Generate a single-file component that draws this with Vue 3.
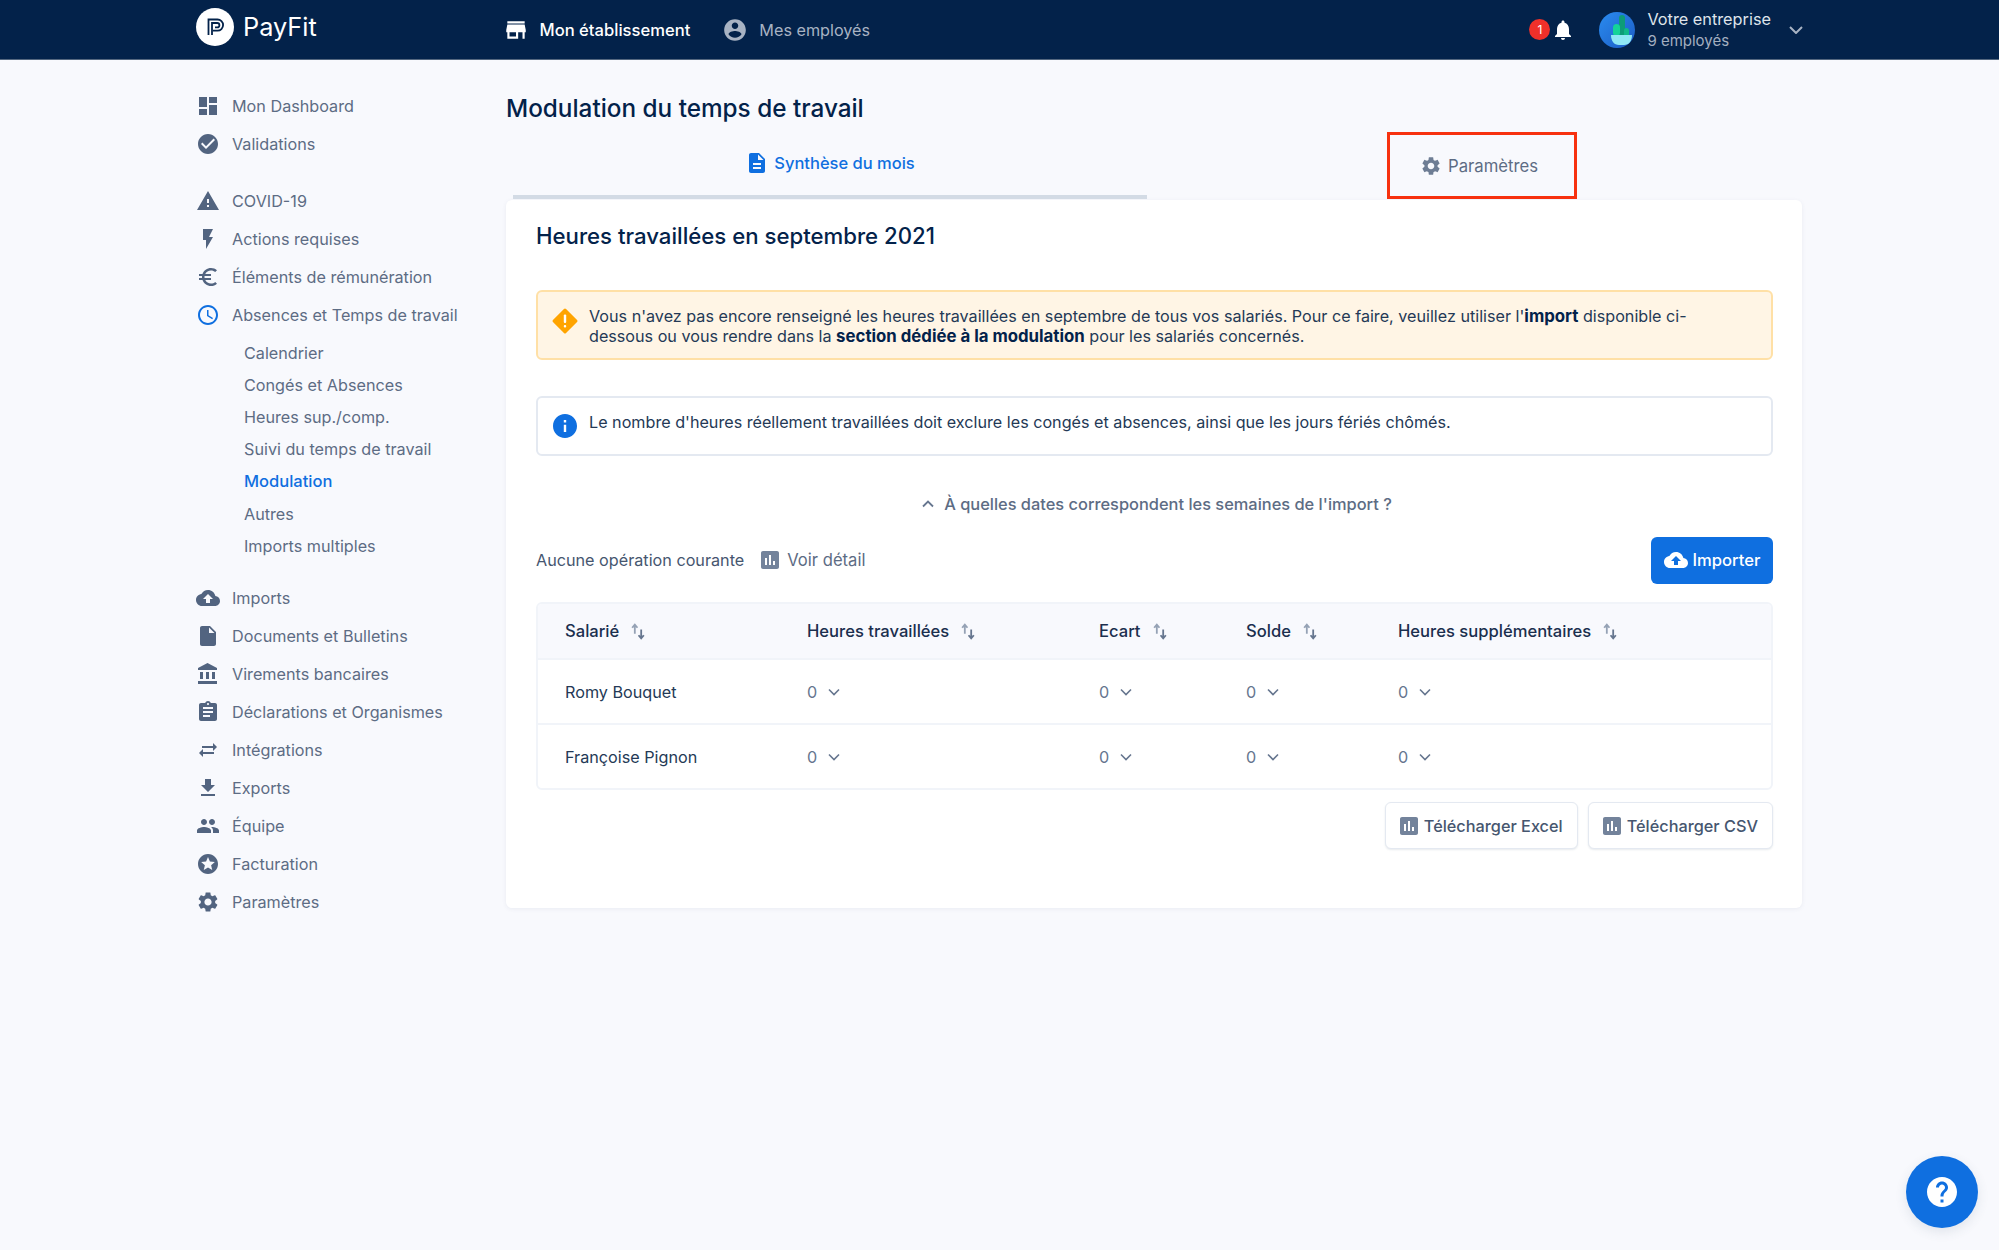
<script setup>
const icons = {
  dashboard: 'M3 13h8V3H3v10zm0 8h8v-6H3v6zm10 0h8V11h-8v10zm0-18v6h8V3h-8z',
  check: 'M12 2C6.48 2 2 6.48 2 12s4.48 10 10 10 10-4.48 10-10S17.52 2 12 2zm-2 15l-5-5 1.41-1.41L10 14.17l7.59-7.59L19 8l-9 9z',
  warning: 'M1 21h22L12 2 1 21zm12-3h-2v-2h2v2zm0-4h-2v-4h2v4z',
  flash: 'M7 2v11h3v9l7-12h-4l4-8z',
  euro: 'M15 18.5c-2.51 0-4.68-1.42-5.76-3.5H15v-2H8.58c-.05-.33-.08-.66-.08-1s.03-.67.08-1H15V9H9.24C10.32 6.92 12.5 5.5 15 5.5c1.61 0 3.09.59 4.23 1.57L21 5.3C19.41 3.87 17.3 3 15 3c-3.92 0-7.24 2.51-8.48 6H3v2h3.06c-.04.33-.06.66-.06 1 0 .34.02.67.06 1H3v2h3.52c1.24 3.49 4.56 6 8.48 6 2.31 0 4.41-.87 6-2.3l-1.78-1.77c-1.13.98-2.6 1.57-4.22 1.57z',
  clock: 'M11.99 2C6.47 2 2 6.48 2 12s4.47 10 9.99 10C17.52 22 22 17.52 22 12S17.52 2 11.99 2zM12 20c-4.42 0-8-3.58-8-8s3.58-8 8-8 8 3.58 8 8-3.58 8-8 8zm.5-13H11v6l5.25 3.15.75-1.23-4.5-2.67z',
  cloud: 'M19.35 10.04C18.67 6.59 15.64 4 12 4 9.11 4 6.6 5.64 5.35 8.04 2.34 8.36 0 10.91 0 14c0 3.31 2.69 6 6 6h13c2.76 0 5-2.24 5-5 0-2.64-2.05-4.78-4.65-4.96zM14 13v4h-4v-4H7l5-5 5 5h-3z',
  file: 'M6 2c-1.1 0-1.99.9-1.99 2L4 20c0 1.1.89 2 1.99 2H18c1.1 0 2-.9 2-2V8l-6-6H6zm7 7V3.5L18.5 9H13z',
  doc: 'M14 2H6c-1.1 0-1.99.9-1.99 2L4 20c0 1.1.89 2 1.99 2H18c1.1 0 2-.9 2-2V8l-6-6zm2 16H8v-2h8v2zm0-4H8v-2h8v2zm-3-5V3.5L18.5 9H13z',
  bank: 'M4 10v7h3v-7H4zm6 0v7h3v-7h-3zM2 22h19v-3H2v3zm14-12v7h3v-7h-3zm-4.5-9L2 6v2h19V6l-9.5-5z',
  clipboard: 'M19 3h-4.18C14.4 1.84 13.3 1 12 1c-1.3 0-2.4.84-2.82 2H5c-1.1 0-2 .9-2 2v14c0 1.1.9 2 2 2h14c1.1 0 2-.9 2-2V5c0-1.1-.9-2-2-2zm-7 0c.55 0 1 .45 1 1s-.45 1-1 1-1-.45-1-1 .45-1 1-1zm2 14H7v-2h7v2zm3-4H7v-2h10v2zm0-4H7V7h10v2z',
  swap: 'M21 9l-4-4v3H6v2h11v3l4-4zM3 15l4 4v-3h11v-2H7v-3l-4 4z',
  download: 'M19 9h-4V3H9v6H5l7 7 7-7zM5 18v2h14v-2H5z',
  people: 'M16 11c1.66 0 2.99-1.34 2.99-3S17.66 5 16 5c-1.66 0-3 1.34-3 3s1.34 3 3 3zm-8 0c1.66 0 2.99-1.34 2.99-3S9.66 5 8 5C6.34 5 5 6.34 5 8s1.34 3 3 3zm0 2c-2.33 0-7 1.17-7 3.5V19h14v-2.5c0-2.33-4.67-3.5-7-3.5zm8 0c-.29 0-.62.02-.97.05 1.16.84 1.97 1.97 1.97 3.45V19h6v-2.5c0-2.33-4.67-3.5-7-3.5z',
  star: 'M11.99 2C6.47 2 2 6.48 2 12s4.47 10 9.99 10C17.52 22 22 17.52 22 12S17.52 2 11.99 2zm4.24 16L12 15.45 7.77 18l1.12-4.81-3.73-3.23 4.92-.42L12 5l1.92 4.53 4.92.42-3.73 3.23L16.23 18z',
  gear: 'M19.14 12.94c.04-.3.06-.61.06-.94 0-.32-.02-.64-.07-.94l2.03-1.58c.18-.14.23-.41.12-.61l-1.92-3.32c-.12-.22-.37-.29-.59-.22l-2.39.96c-.5-.38-1.03-.7-1.62-.94l-.36-2.54c-.04-.24-.24-.41-.48-.41h-3.84c-.24 0-.43.17-.47.41l-.36 2.54c-.59.24-1.13.57-1.62.94l-2.39-.96c-.22-.08-.47 0-.59.22L2.74 8.87c-.12.21-.08.47.12.61l2.03 1.58c-.05.3-.09.63-.09.94s.02.64.07.94l-2.03 1.58c-.18.14-.23.41-.12.61l1.92 3.32c.12.22.37.29.59.22l2.39-.96c.5.38 1.03.7 1.62.94l.36 2.54c.05.24.24.41.48.41h3.84c.24 0 .44-.17.47-.41l.36-2.54c.59-.24 1.13-.56 1.62-.94l2.39.96c.22.08.47 0 .59-.22l1.92-3.32c.12-.22.07-.47-.12-.61l-2.01-1.58zM12 15.6c-1.98 0-3.6-1.62-3.6-3.6s1.62-3.6 3.6-3.6 3.6 1.62 3.6 3.6-1.62 3.6-3.6 3.6z',
  store: 'M20 4H4v2h16V4zm1 10v-2l-1-5H4l-1 5v2h1v6h10v-6h4v6h2v-6h1zm-9 4H6v-4h6v4z',
  account: 'M12 2C6.48 2 2 6.48 2 12s4.48 10 10 10 10-4.48 10-10S17.52 2 12 2zm0 3c1.66 0 3 1.34 3 3s-1.34 3-3 3-3-1.34-3-3 1.34-3 3-3zm0 14.2c-2.5 0-4.71-1.28-6-3.22.03-1.99 4-3.08 6-3.08 1.99 0 5.97 1.09 6 3.08-1.29 1.94-3.5 3.22-6 3.22z',
  bell: 'M12 22c1.1 0 2-.9 2-2h-4c0 1.1.89 2 2 2zm6-6v-5c0-3.07-1.64-5.64-4.5-6.32V4c0-.83-.67-1.5-1.5-1.5s-1.5.67-1.5 1.5v.68C7.63 5.36 6 7.92 6 11v5l-2 2v1h16v-1l-2-2z',
  chart: 'M19 3H5c-1.1 0-2 .9-2 2v14c0 1.1.9 2 2 2h14c1.1 0 2-.9 2-2V5c0-1.1-.9-2-2-2zM9 17H7v-7h2v7zm4 0h-2V7h2v10zm4 0h-2v-4h2v4z',
  help: 'M12 2C6.48 2 2 6.48 2 12s4.48 10 10 10 10-4.48 10-10S17.52 2 12 2zm1 17h-2v-2h2v2zm2.07-7.75l-.9.92C13.45 12.9 13 13.5 13 15h-2v-.5c0-1.1.45-2.1 1.17-2.83l1.24-1.26c.37-.36.59-.86.59-1.41 0-1.1-.9-2-2-2s-2 .9-2 2H8c0-2.21 1.79-4 4-4s4 1.79 4 4c0 .88-.36 1.68-.93 2.25z',
  info: 'M12 2C6.48 2 2 6.48 2 12s4.48 10 10 10 10-4.48 10-10S17.52 2 12 2zm1 15h-2v-6h2v6zm0-8h-2V7h2v2z'
}

const menuGroups = [
  [
    { label: 'Mon Dashboard', icon: 'dashboard' },
    { label: 'Validations', icon: 'check' }
  ],
  [
    { label: 'COVID-19', icon: 'warning' },
    { label: 'Actions requises', icon: 'flash' },
    { label: 'Éléments de rémunération', icon: 'euro' },
    {
      label: 'Absences et Temps de travail',
      icon: 'clock',
      active: true,
      children: ['Calendrier', 'Congés et Absences', 'Heures sup./comp.', 'Suivi du temps de travail', 'Modulation', 'Autres', 'Imports multiples']
    }
  ],
  [
    { label: 'Imports', icon: 'cloud' },
    { label: 'Documents et Bulletins', icon: 'file' },
    { label: 'Virements bancaires', icon: 'bank' },
    { label: 'Déclarations et Organismes', icon: 'clipboard' },
    { label: 'Intégrations', icon: 'swap' },
    { label: 'Exports', icon: 'download' },
    { label: 'Équipe', icon: 'people' },
    { label: 'Facturation', icon: 'star' },
    { label: 'Paramètres', icon: 'gear' }
  ]
]

const columns = ['Salarié', 'Heures travaillées', 'Ecart', 'Solde', 'Heures supplémentaires']
const employees = ['Romy Bouquet', 'Françoise Pignon']
</script>

<template>
  <div class="page">
    <header class="topbar">
      <div class="brand">
        <svg class="brand-mark" viewBox="0 0 38 38">
          <circle cx="19" cy="19" r="19" fill="#fff" />
          <path d="M12.5 27V11.5h9a5.6 5.6 0 0 1 0 11.2h-4.6" fill="none" stroke="#03224a" stroke-width="1.8" />
          <path d="M16 27V15h5.2a2.2 2.2 0 0 1 0 4.4H19" fill="none" stroke="#03224a" stroke-width="1.8" />
        </svg>
        <span class="brand-name">PayFit</span>
      </div>
      <nav class="topnav">
        <a class="topnav-item current">
          <svg viewBox="0 0 24 24"><path :d="icons.store" /></svg>
          Mon établissement
        </a>
        <a class="topnav-item">
          <svg viewBox="0 0 24 24"><path :d="icons.account" /></svg>
          Mes employés
        </a>
      </nav>
      <div class="notif">
        <span class="notif-badge">1</span>
        <svg viewBox="0 0 24 24"><path :d="icons.bell" /></svg>
      </div>
      <div class="company">
        <svg class="company-logo" viewBox="0 0 36 36">
          <defs>
            <linearGradient id="avatar-bg" x1="0" y1="0" x2="1" y2="1">
              <stop offset="0" stop-color="#2a8cf0" />
              <stop offset="1" stop-color="#1c5cc4" />
            </linearGradient>
          </defs>
          <circle cx="18" cy="18" r="18" fill="url(#avatar-bg)" />
          <rect x="20" y="3" width="6" height="21" rx="3" fill="#0d9c78" />
          <rect x="14" y="12" width="7" height="12" rx="3.5" fill="#14d497" />
          <rect x="25" y="16" width="5" height="9" rx="2.5" fill="#0fb888" />
          <path d="M12 23h21c0 6-3 10-8 10h-5c-5 0-8-4-8-10z" fill="#8fe8f4" />
        </svg>
        <div class="company-text">
          <div class="company-name">Votre entreprise</div>
          <div class="company-sub">9 employés</div>
        </div>
        <svg class="company-caret" viewBox="0 0 14 8"><path d="M1 1l6 6 6-6" /></svg>
      </div>
    </header>

    <div class="layout">
      <aside class="sidebar">
        <div v-for="(group, g) in menuGroups" :key="g" class="menu-group">
          <template v-for="item in group" :key="item.label">
            <a class="menu-item" :class="{ active: item.active }">
              <svg viewBox="0 0 24 24"><path :d="icons[item.icon]" /></svg>
              <span>{{ item.label }}</span>
            </a>
            <div v-if="item.children" class="submenu">
              <a
                v-for="child in item.children"
                :key="child"
                class="submenu-item"
                :class="{ current: child === 'Modulation' }"
              >{{ child }}</a>
            </div>
          </template>
        </div>
      </aside>

      <main class="content">
        <h1 class="page-title">Modulation du temps de travail</h1>

        <div class="tabs">
          <a class="tab tab-active">
            <svg viewBox="0 0 24 24"><path :d="icons.doc" /></svg>
            Synthèse du mois
          </a>
          <a class="tab tab-marked">
            <svg viewBox="0 0 24 24"><path :d="icons.gear" /></svg>
            Paramètres
          </a>
        </div>

        <section class="card">
          <h2 class="card-title">Heures travaillées en septembre 2021</h2>

          <div class="notice notice-warn">
            <svg class="notice-diamond" viewBox="0 0 28 28">
              <path d="M14 3l11 11-11 11L3 14z" fill="#ffa400" stroke="#ffa400" stroke-width="3" stroke-linejoin="round" />
              <rect x="12.8" y="7.5" width="2.4" height="8.5" rx="1" fill="#fff" />
              <rect x="12.8" y="18" width="2.4" height="2.4" rx="1" fill="#fff" />
            </svg>
            <p>
              Vous n'avez pas encore renseigné les heures travaillées en septembre de tous vos salariés. Pour ce faire, veuillez utiliser l'<b>import</b> disponible ci-dessous ou vous rendre dans la <b>section dédiée à la modulation</b> pour les salariés concernés.
            </p>
          </div>

          <div class="notice notice-info">
            <svg class="notice-icon" viewBox="2 2 20 20"><path :d="icons.info" /></svg>
            <p>Le nombre d'heures réellement travaillées doit exclure les congés et absences, ainsi que les jours fériés chômés.</p>
          </div>

          <a class="toggle-dates">
            <svg viewBox="0 0 12 8"><path d="M1 6.5l5-5 5 5" /></svg>
            À quelles dates correspondent les semaines de l'import ?
          </a>

          <div class="ops-row">
            <span class="ops-status">Aucune opération courante</span>
            <a class="ops-detail">
              <svg viewBox="3 3 18 18"><path :d="icons.chart" /></svg>
              Voir détail
            </a>
            <button class="btn-primary" type="button">
              <svg viewBox="0 0 24 24"><path :d="icons.cloud" /></svg>
              Importer
            </button>
          </div>

          <div class="grid-table">
            <div class="grid-row grid-head">
              <div v-for="col in columns" :key="col" class="head-cell">
                {{ col }}
                <svg class="sort-icon" viewBox="0 0 13 16">
                  <path d="M3.5 10V1.5M1 4.5l2.5-3 2.5 3" stroke="#95a2b5" />
                  <path d="M9.5 6v8.5M7 11.5l2.5 3 2.5-3" stroke="#66768f" />
                </svg>
              </div>
            </div>
            <div v-for="name in employees" :key="name" class="grid-row grid-body">
              <div class="name-cell">{{ name }}</div>
              <div v-for="n in 4" :key="n" class="value-cell">
                0
                <svg viewBox="0 0 12 8"><path d="M1 1.5l5 5 5-5" /></svg>
              </div>
            </div>
          </div>

          <div class="exports">
            <button class="btn-light" type="button">
              <svg viewBox="3 3 18 18"><path :d="icons.chart" /></svg>
              Télécharger Excel
            </button>
            <button class="btn-light" type="button">
              <svg viewBox="3 3 18 18"><path :d="icons.chart" /></svg>
              Télécharger CSV
            </button>
          </div>
        </section>
      </main>
    </div>

    <button class="help-btn" type="button" aria-label="Aide">
      <svg viewBox="2 2 20 20"><path :d="icons.help" /></svg>
    </button>
  </div>
</template>

<style>
html,
body {
  margin: 0;
  background: #f8f9fd;
}
</style>

<style scoped>
.page {
  min-height: 1250px;
  background: #f8f9fd;
  font-family: Inter, "Liberation Sans", sans-serif;
  font-size: 16.2px;
  color: #1b2f4e;
}

.topbar {
  display: flex;
  align-items: center;
  height: 60px;
  box-sizing: border-box;
  padding-left: 196px;
  background: #03224a;
  border-bottom: 1px solid #54677f;
}

.brand {
  display: flex;
  align-items: center;
  width: 306.5px;
  margin-top: -6px;
}

.brand-mark {
  width: 38px;
  height: 38px;
}

.brand-name {
  margin-left: 9px;
  color: #fff;
  font-size: 25.3px;
}

.topnav {
  display: flex;
  gap: 32px;
}

.topnav-item {
  display: flex;
  align-items: center;
  gap: 11px;
  color: #a8b3c3;
}

.topnav-item.current {
  color: #fff;
  font-size: 16.6px;
  font-weight: 500;
}

.topnav-item svg {
  width: 26px;
  height: 26px;
  fill: currentColor;
}

.notif {
  display: flex;
  align-items: center;
  margin-left: auto;
  margin-right: 24px;
}

.notif-badge {
  display: flex;
  align-items: center;
  justify-content: center;
  width: 21px;
  height: 21px;
  border-radius: 50%;
  background: #f0302a;
  color: #fff;
  font-size: 12px;
}

.notif svg {
  width: 24px;
  height: 24px;
  margin-left: 1px;
  fill: #fff;
}

.company {
  display: flex;
  align-items: center;
  margin-right: 196px;
}

.company-logo {
  width: 36px;
  height: 36px;
}

.company-text {
  margin-left: 12px;
  line-height: 21px;
}

.company-name {
  color: #dfe4ea;
  font-size: 16.3px;
}

.company-sub {
  color: #a3afc0;
  font-size: 15px;
}

.company-caret {
  width: 14px;
  height: 8px;
  margin-left: 18px;
  fill: none;
  stroke: #a8b3c3;
  stroke-width: 2;
}

.layout {
  display: flex;
}

.sidebar {
  width: 506px;
  box-sizing: border-box;
  flex: none;
  padding: 27px 0 0 196px;
}

.menu-group + .menu-group {
  margin-top: 19px;
}

.menu-item {
  display: flex;
  align-items: center;
  gap: 12px;
  height: 38px;
  color: #5d6c84;
}

.menu-item svg {
  width: 24px;
  height: 24px;
  flex: none;
  fill: #526480;
}

.menu-item.active svg {
  fill: #0f6fe0;
}

.submenu {
  display: flex;
  flex-direction: column;
  margin-top: 3px;
  margin-bottom: -2px;
}

.submenu-item {
  display: flex;
  align-items: center;
  height: 32.1px;
  padding-left: 48px;
  color: #5d6c84;
}

.submenu-item.current {
  color: #0f6fe0;
  font-size: 16.5px;
  font-weight: 500;
}

.content {
  width: 1296px;
  flex: none;
}

.page-title {
  margin: 30px 0 0;
  color: #03224a;
  font-size: 24.3px;
  font-weight: 500;
  line-height: 36px;
}

.tabs {
  display: flex;
  margin-top: 6px;
  margin-left: 7px;
}

.tab {
  display: flex;
  align-items: center;
  justify-content: center;
  gap: 6px;
  box-sizing: border-box;
}

.tab svg {
  width: 22px;
  height: 22px;
  fill: currentColor;
}

.tab-active {
  width: 634px;
  height: 67px;
  gap: 5px;
  padding-bottom: 2px;
  border-bottom: 4px solid #d3dbe5;
  color: #0f6fe0;
  font-size: 16.5px;
  font-weight: 500;
}

.tab-active svg {
  width: 24px;
  height: 24px;
}

.tab-marked {
  width: 190px;
  height: 67px;
  margin-left: 240px;
  padding-right: 6px;
  border: 3px solid #f7310f;
  color: #5d6c84;
  font-size: 16.7px;
}

.tab-marked svg {
  fill: #6e7d94;
}

.card {
  box-sizing: border-box;
  height: 708px;
  margin-top: 1px;
  padding: 21px 29px 0 30px;
  background: #fff;
  border-radius: 6px;
  box-shadow: 0 1px 4px rgba(60, 80, 110, 0.08);
}

.card-title {
  margin: 0;
  color: #03224a;
  font-size: 22.2px;
  font-weight: 500;
  line-height: 30px;
}

.notice {
  display: flex;
  box-sizing: border-box;
  border-radius: 6px;
  font-size: 16.16px;
  line-height: 19.5px;
  color: #243956;
}

.notice p {
  margin: 0;
}

.notice b {
  color: #03224a;
  font-size: 16.8px;
  font-weight: 700;
}

.notice-warn {
  height: 70px;
  margin-top: 39px;
  padding: 15px 60px 0 13px;
  background: #fff5e5;
  border: 2px solid #ffe0a6;
}

.notice-diamond {
  width: 28px;
  height: 28px;
  flex: none;
  margin-right: 10px;
}

.notice-info {
  height: 60px;
  margin-top: 36px;
  padding: 15px 16px 0 15px;
  border: 2px solid #e4e9f1;
}

.notice-icon {
  width: 24px;
  height: 24px;
  flex: none;
  margin-top: 1px;
  margin-right: 12px;
  fill: #0f6fe0;
}

.toggle-dates {
  display: flex;
  align-items: center;
  justify-content: center;
  gap: 10px;
  margin-top: 38px;
  padding-left: 5px;
  line-height: 20px;
  color: #5d6c84;
  font-size: 16.4px;
  font-weight: 500;
}

.toggle-dates svg {
  width: 12px;
  height: 8px;
  fill: none;
  stroke: #66768f;
  stroke-width: 1.8;
}

.ops-row {
  display: flex;
  align-items: center;
  margin-top: 22.5px;
  color: #5d6c84;
}

.ops-status {
  color: #46566f;
}

.ops-detail {
  display: flex;
  align-items: center;
  gap: 8px;
  margin-left: 17px;
  font-size: 16.6px;
}

.ops-detail svg,
.btn-light svg {
  width: 18px;
  height: 18px;
  fill: #73839b;
}

.btn-primary {
  display: flex;
  align-items: center;
  justify-content: center;
  gap: 5px;
  width: 122px;
  height: 47px;
  margin-left: auto;
  padding: 0;
  border: 0;
  border-radius: 6px;
  background: #0f6fe0;
  color: #fff;
  font: 500 16.6px Inter, "Liberation Sans", sans-serif;
}

.btn-primary svg {
  width: 24px;
  height: 24px;
  fill: #fff;
}

.grid-table {
  margin-top: 18.5px;
  border: 2px solid #f1f4f9;
  border-radius: 6px;
  overflow: hidden;
}

.grid-row {
  display: grid;
  grid-template-columns: 242px 292px 147px 152px 1fr;
  align-items: center;
  padding-left: 27px;
}

.grid-head {
  height: 54px;
  background: #f8f9fd;
  color: #1b2f4e;
  font-size: 16.6px;
  font-weight: 500;
}

.grid-body {
  height: 65px;
  border-top: 2px solid #f1f4f9;
  box-sizing: border-box;
}

.head-cell {
  display: flex;
  align-items: center;
  gap: 12px;
}

.sort-icon {
  width: 14px;
  height: 17px;
  fill: none;
  stroke-width: 1.7;
}

.name-cell {
  color: #243956;
}

.value-cell {
  display: flex;
  align-items: center;
  gap: 11px;
  color: #66768f;
}

.value-cell svg {
  width: 12px;
  height: 8px;
  fill: none;
  stroke: #66768f;
  stroke-width: 1.6;
}

.exports {
  display: flex;
  justify-content: flex-end;
  gap: 10px;
  margin-top: 12px;
}

.btn-light {
  display: flex;
  align-items: center;
  gap: 6px;
  height: 47px;
  padding: 0 14px;
  background: #fff;
  border: 1px solid #e4e9f1;
  border-radius: 6px;
  box-shadow: 0 1px 2px rgba(60, 80, 110, 0.12);
  color: #46566f;
  font: 500 16.3px Inter, "Liberation Sans", sans-serif;
}

.help-btn {
  position: fixed;
  right: 21px;
  bottom: 22px;
  display: flex;
  align-items: center;
  justify-content: center;
  width: 72px;
  height: 72px;
  padding: 0;
  border: 0;
  border-radius: 50%;
  background: #0f6fe0;
  box-shadow: 0 4px 12px rgba(60, 80, 110, 0.12);
}

.help-btn svg {
  width: 30px;
  height: 30px;
  fill: #fff;
}
</style>
